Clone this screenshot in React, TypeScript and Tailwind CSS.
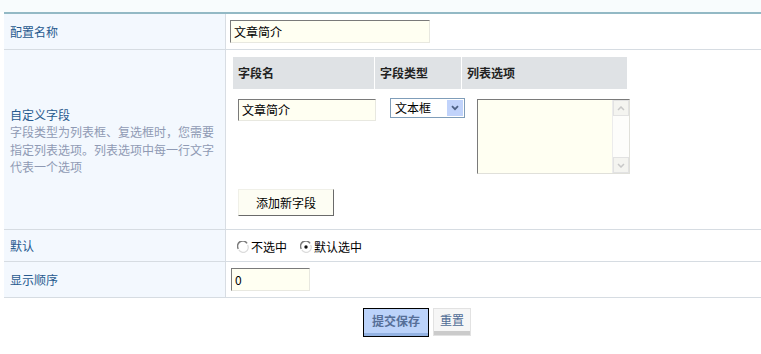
import React from "react";

const font = "font-['SimSun','Noto_Sans_CJK_SC','Liberation_Sans',sans-serif]";

function Radio({ checked }: { checked?: boolean }) {
  return (
    <svg width="12" height="12" viewBox="0 0 12 12" className="shrink-0">
      <path d="M10 2.4A5 5 0 0 0 1.3 7.8" fill="none" stroke="#7c7c7c" strokeWidth="1.5" />
      <path d="M1.8 8.8A5 5 0 0 0 10.6 4" fill="none" stroke="#dcdcdc" strokeWidth="1.3" />
      <circle cx="6" cy="6" r="3.6" fill="#fff" />
      {checked ? <circle cx="6" cy="6" r="1.7" fill="#111" /> : null}
    </svg>
  );
}

function TextBox({ value, className }: { value: string; className: string }) {
  return (
    <div
      className={`flex items-center border border-t-[#7a7a7a] border-l-[#7a7a7a] border-r-[#e8e8e0] border-b-[#e8e8e0] bg-[#fffff2] pl-[3px] text-[12px] text-black ${className}`}
    >
      {value}
    </div>
  );
}

function Label({ children }: { children: React.ReactNode }) {
  return (
    <div className="flex items-center border-r border-[#d8dde3] bg-[#f3f8fe] pl-[6px] text-[12px] text-[#275a8f]">
      {children}
    </div>
  );
}

export default function App() {
  return (
    <div className={`h-[354px] w-[761px] overflow-hidden bg-white ${font}`}>
      <div className="h-[12px] bg-[#f8fcfd]" />
      <div className="ml-[4px] border-t-2 border-[#93b9c5]">
        {/* 配置名称 */}
        <div className="grid h-[36px] grid-cols-[222px_1fr] border-b border-[#d6dce2]">
          <Label>配置名称</Label>
          <div className="flex items-center pl-[4px]">
            <TextBox value="文章简介" className="h-[23px] w-[200px]" />
          </div>
        </div>

        {/* 自定义字段 */}
        <div className="grid h-[180px] grid-cols-[222px_1fr] border-b border-[#d6dce2]">
          <div className="flex flex-col justify-center border-r border-[#d8dde3] bg-[#f3f8fe] pl-[6px] pr-[8px] pt-[2px] text-[12px] leading-[17.5px]">
            <div className="text-[#275a8f]">自定义字段</div>
            <div className="text-[#8f9ab4]">
              字段类型为列表框、复选框时，您需要指定列表选项。列表选项中每一行文字代表一个选项
            </div>
          </div>
          <div className="pl-[7px] pt-[7px]">
            <div className="grid h-[32px] w-[395px] grid-cols-[141px_86px_165px] gap-x-px text-[12px] font-bold text-[#222]">
              <div className="flex items-center bg-[#dfe2e5] pl-[5px]">字段名</div>
              <div className="flex items-center bg-[#dfe2e5] pl-[5px]">字段类型</div>
              <div className="flex items-center bg-[#dfe2e5] pl-[5px]">列表选项</div>
            </div>
            <div className="mt-[9px] flex items-start">
              <TextBox value="文章简介" className="ml-[5px] mt-px h-[22px] w-[138px]" />
              <div className="ml-[14px] flex h-[20px] w-[75px] items-center border border-[#7f9db9] bg-white pl-[4px] text-[12px] text-black">
                <span className="flex-1">文本框</span>
                <span className="mr-px flex h-[16px] w-[16px] items-center justify-center bg-[#c1d3fb]">
                  <svg width="8" height="6" viewBox="0 0 8 6">
                    <path d="M1 1.2 L4 4.2 L7 1.2" fill="none" stroke="#4d6185" strokeWidth="1.8" />
                  </svg>
                </span>
              </div>
              <div className="ml-[12px] mt-px flex h-[75px] w-[153px] border border-t-[#7a7a7a] border-l-[#7a7a7a] border-r-[#e0e0da] border-b-[#e0e0da] bg-[#fffff2]">
                <div className="flex-1" />
                <div className="flex w-[17px] flex-col border-l border-[#ececec] bg-[#fdfdfb]">
                  <div className="flex h-[16px] items-center justify-center border border-[#e2e2e2] bg-[#f4f4f0]">
                    <svg width="8" height="5" viewBox="0 0 8 5">
                      <path d="M1 4 L4 1 L7 4" fill="none" stroke="#c8c8c8" strokeWidth="1.5" />
                    </svg>
                  </div>
                  <div className="flex-1" />
                  <div className="flex h-[16px] items-center justify-center border border-[#e2e2e2] bg-[#f4f4f0]">
                    <svg width="8" height="5" viewBox="0 0 8 5">
                      <path d="M1 1 L4 4 L7 1" fill="none" stroke="#c8c8c8" strokeWidth="1.5" />
                    </svg>
                  </div>
                </div>
              </div>
            </div>
            <div className="ml-[5px] mt-[15px] flex h-[27px] w-[96px] items-center justify-center border border-t-[#f0f0e8] border-l-[#f0f0e8] border-r-[#6a6a6a] border-b-[#6a6a6a] bg-[#fdfdf3] text-[12px] text-black">
              添加新字段
            </div>
          </div>
        </div>

        {/* 默认 */}
        <div className="grid h-[32px] grid-cols-[222px_1fr] border-b border-[#d6dce2]">
          <Label>默认</Label>
          <div className="flex items-center pl-[11px] pt-[2px] text-[12px] text-black">
            <Radio />
            <span className="ml-[2px]">不选中</span>
            <span className="ml-[13px]">
              <Radio checked />
            </span>
            <span className="ml-[2px]">默认选中</span>
          </div>
        </div>

        {/* 显示顺序 */}
        <div className="grid h-[36px] grid-cols-[222px_1fr] border-b border-[#d6dce2]">
          <Label>显示顺序</Label>
          <div className="flex items-center pl-[5px]">
            <TextBox value="0" className="h-[23px] w-[79px]" />
          </div>
        </div>

        <div className="mt-[10px] flex pl-[359px]">
          <div className="flex h-[29px] w-[66px] flex-col border border-black bg-[#bcd3fa]">
            <div className="flex flex-1 items-center justify-center text-[12px] font-bold text-[#566f98]">
              提交保存
            </div>
            <div className="h-[3px] bg-[#93b2e2]" />
          </div>
          <div className="ml-[4px] flex h-[28px] w-[38px] flex-col border border-[#e2e2e2] bg-[#f6f6f6]">
            <div className="flex flex-1 items-center justify-center text-[12px] text-[#4f6c95]">重置</div>
            <div className="h-[4px] bg-[#cbcbcb]" />
          </div>
        </div>
      </div>
    </div>
  );
}
